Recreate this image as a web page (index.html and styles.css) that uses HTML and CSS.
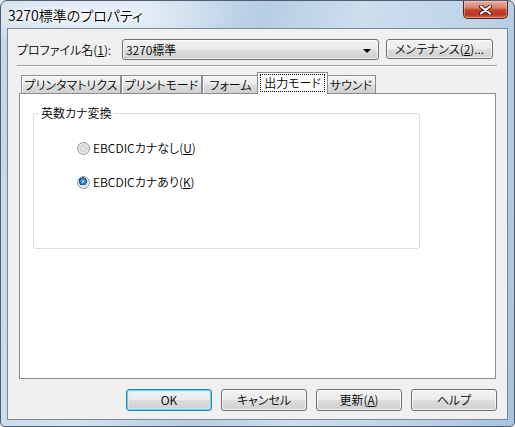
FILE: index.html
```html
<!DOCTYPE html>
<html lang="ja">
<head>
<meta charset="utf-8">
<title>3270標準のプロパティ</title>
<link rel="stylesheet" href="styles.css">
</head>
<body>
<div class="window">
  <div class="titlebar">
    <span class="title">3270標準のプロパティ</span>
    <div class="close">
      <svg width="13" height="10" viewBox="0 0 13 10">
        <path d="M2 1.5 L11 8.5 M11 1.5 L2 8.5" stroke="#4a1a12" stroke-width="4" stroke-linecap="round" fill="none"/>
        <path d="M2 1.5 L11 8.5 M11 1.5 L2 8.5" stroke="#ffffff" stroke-width="2.2" stroke-linecap="round" fill="none"/>
      </svg>
    </div>
  </div>
  <div class="client">
    <div class="profile-row">
      <span class="label">プロファイル名(<u>1</u>):</span>
      <div class="combo"><span>3270標準</span><span class="arrow"></span></div>
      <div class="btn maint">メンテナンス(<u>2</u>)...</div>
    </div>
    <div class="separator"></div>
    <div class="tabs">
      <div class="tab t1">プリンタマトリクス</div>
      <div class="tab t2">プリントモード</div>
      <div class="tab t3">フォーム</div>
      <div class="tab selected"><span class="focus">出力モード</span></div>
      <div class="tab t5">サウンド</div>
    </div>
    <div class="panel">
      <fieldset class="group">
        <legend>英数カナ変換</legend>
        <div class="radio first"><span class="circle"></span>EBCDICカナなし(<u>U</u>)</div>
        <div class="radio second"><span class="circle checked"></span>EBCDICカナあり(<u>K</u>)</div>
      </fieldset>
    </div>
    <div class="buttons">
      <div class="btn default">OK</div>
      <div class="btn">キャンセル</div>
      <div class="btn">更新(<u>A</u>)</div>
      <div class="btn">ヘルプ</div>
    </div>
  </div>
</div>
</body>
</html>
```
FILE: styles.css
```css
html, body {
  margin: 0;
  padding: 0;
  background: #e6ecf2;
}

body {
  font-family: "Noto Sans CJK JP", "Noto Sans", sans-serif;
  font-size: 12px;
  font-weight: 350;
  font-feature-settings: "palt";
  color: #000;
}

.window {
  width: 515px;
  height: 427px;
  box-sizing: border-box;
  border: 1px solid #4f5f70;
  border-radius: 7px 7px 5px 5px;
  padding: 0 6px 6px;
  display: flex;
  flex-direction: column;
  background:
    radial-gradient(ellipse 170px 30px at 70px 14px, rgba(255,255,255,0.7), rgba(255,255,255,0) 100%),
    linear-gradient(100deg, #c3d6e8 0%, #d3e2f0 25%, #b6cee4 45%, #cddeed 62%, #c0d5e9 80%, #a6c3df 100%);
}

.titlebar {
  height: 27px;
  display: flex;
  justify-content: space-between;
  align-items: flex-start;
}

.title {
  font-size: 14px;
  line-height: 16px;
  margin-top: 6px;
  padding-left: 1px;
  text-shadow: 0 0 5px #fff, 0 0 3px #fff;
}

.close {
  width: 45px;
  height: 18px;
  box-sizing: border-box;
  border: 1px solid #53241b;
  border-top: none;
  border-radius: 0 0 5px 5px;
  background: linear-gradient(#eab0a2 0%, #d7806e 40%, #c2442c 52%, #b8351f 80%, #cf6a4c 100%);
  box-shadow: inset 0 0 0 1px rgba(255, 210, 200, 0.45);
  display: flex;
  align-items: center;
  justify-content: center;
}

.client {
  flex: 1;
  border: 1px solid #7a8794;
  background: #f0f0f0;
  display: flex;
  flex-direction: column;
}

.profile-row {
  display: flex;
  align-items: flex-start;
  margin: 10px 0 0 9px;
  height: 21px;
}

.label {
  width: 105px;
  line-height: 21px;
  flex: none;
}

.combo {
  width: 257px;
  height: 21px;
  box-sizing: border-box;
  border: 1px solid #707070;
  border-radius: 3px;
  background: linear-gradient(#f2f2f2 0%, #ebebeb 48%, #dddddd 52%, #cfcfcf 100%);
  box-shadow: inset 0 0 0 1px rgba(255,255,255,0.7);
  display: flex;
  align-items: center;
  justify-content: space-between;
  padding: 0 7px 0 3px;
  line-height: 19px;
}

.arrow {
  width: 0;
  height: 0;
  border-left: 4px solid transparent;
  border-right: 4px solid transparent;
  border-top: 4px solid #000;
  margin-top: 2px;
}

.btn {
  width: 86px;
  height: 22px;
  box-sizing: border-box;
  border: 1px solid #707070;
  border-radius: 3px;
  background: linear-gradient(#f2f2f2 0%, #ebebeb 48%, #dddddd 52%, #cfcfcf 100%);
  box-shadow: inset 0 0 0 1px rgba(255,255,255,0.75);
  display: flex;
  align-items: center;
  justify-content: center;
  line-height: 20px;
}

.btn.maint {
  width: 107px;
  height: 20px;
  margin-left: 7px;
  line-height: 18px;
}

.btn.default {
  border-color: #3c7fb1;
  box-shadow: inset 0 0 0 1px #5ed4f8, inset 0 0 0 2px rgba(200,240,253,0.6);
}

.separator {
  margin: 5px 0 0 9px;
  width: 480px;
  border-top: 1px solid #a0a0a0;
  border-bottom: 1px solid #ffffff;
}

.tabs {
  display: flex;
  align-items: flex-end;
  margin: 5px 0 0 13px;
  height: 21px;
  position: relative;
  z-index: 1;
}

.tab {
  height: 18px;
  box-sizing: border-box;
  border: 1px solid #898c95;
  border-bottom: none;
  background: linear-gradient(#f4f4f4 0%, #ebebeb 48%, #dddddd 52%, #d0d0d0 100%);
  box-shadow: inset 1px 1px 0 #fcfcfc;
  text-align: center;
  line-height: 17px;
  white-space: nowrap;
  flex: none;
}

.t1 { width: 100px; }
.t2 { width: 81px; }
.t3 { width: 57px; }
.t5 { width: 50px; }

.tab.selected {
  width: 71px;
  height: 22px;
  margin: 0 -2px -1px -2px;
  background: #ffffff;
  box-shadow: none;
  position: relative;
  z-index: 2;
  display: flex;
  justify-content: center;
  padding-top: 1px;
}

.focus {
  display: block;
  width: 65px;
  height: 18px;
  box-sizing: border-box;
  border: 1px dotted #000;
  line-height: 16px;
}

.panel {
  margin-left: 11px;
  width: 477px;
  height: 286px;
  box-sizing: border-box;
  border: 1px solid #898c95;
  background: #ffffff;
}

.group {
  margin: 11px 0 0 13px;
  width: 387px;
  height: 144px;
  box-sizing: border-box;
  border: 1px solid #d5dfe5;
  border-radius: 3px;
  padding: 0 0 0 43px;
}

.group legend {
  padding: 0 2px;
  margin-left: -38px;
  line-height: 16px;
  font-size: 12px;
}

.radio {
  display: flex;
  align-items: center;
  height: 16px;
  line-height: 16px;
}

.radio.first { margin-top: 19px; }
.radio.second { margin-top: 18px; }

.circle {
  width: 13px;
  height: 13px;
  box-sizing: border-box;
  border-radius: 50%;
  border: 1px solid #8f9396;
  background: radial-gradient(circle at 50% 50%, #e8e8e8 0%, #d6d6d6 45%, #f4f4f4 70%, #ffffff 100%);
  margin-right: 3px;
  flex: none;
  position: relative;
}

.circle.checked {
  background:
    radial-gradient(circle at 45% 40%, #a8e0ff 0%, #3f93d6 22%, #1a5c9c 38%, #0e3f70 44%, rgba(0,0,0,0) 46%),
    radial-gradient(circle at 50% 50%, #e8e8e8 0%, #dcdcdc 45%, #f4f4f4 70%, #ffffff 100%);
}

.buttons {
  display: flex;
  justify-content: flex-end;
  gap: 9px;
  margin: 10px 10px 0 0;
}
```
